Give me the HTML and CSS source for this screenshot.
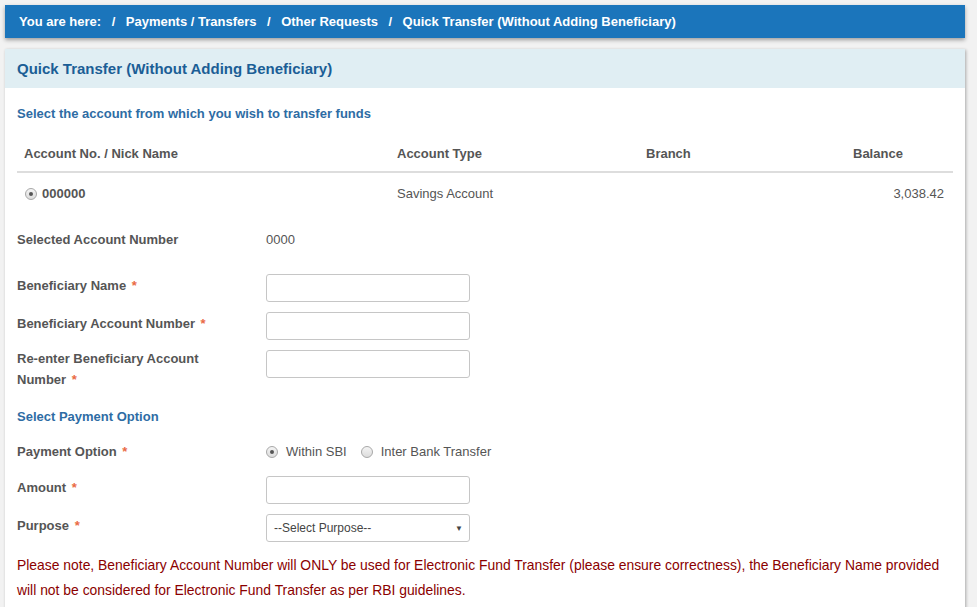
FILE: index.html
```html
<!DOCTYPE html>
<html>
<head>
<meta charset="utf-8">
<link rel="stylesheet" href="styles.css">
</head>
<body>
<div class="page">
  <nav class="crumbs">
    <span>You are here:</span><span class="sep">/</span>
    <span>Payments / Transfers</span><span class="sep">/</span>
    <span>Other Requests</span><span class="sep">/</span>
    <span>Quick Transfer (Without Adding Beneficiary)</span>
  </nav>
  <section class="panel">
    <header class="panel-head">Quick Transfer (Without Adding Beneficiary)</header>
    <div class="panel-body">
      <p class="subhead intro">Select the account from which you wish to transfer funds</p>
      <div class="acct-table">
        <div class="thead">
          <div>Account No. / Nick Name</div>
          <div>Account Type</div>
          <div>Branch</div>
          <div>Balance</div>
        </div>
        <div class="trow">
          <div class="acct-no"><span class="radio checked"></span>000000</div>
          <div>Savings Account</div>
          <div></div>
          <div class="num">3,038.42</div>
        </div>
      </div>

      <div class="frow selected">
        <label class="lbl">Selected Account Number</label>
        <span class="val">0000</span>
      </div>

      <div class="frow field first">
        <label class="lbl">Beneficiary Name <span class="req">*</span></label>
        <input class="inp" type="text">
      </div>
      <div class="frow field">
        <label class="lbl">Beneficiary Account Number <span class="req">*</span></label>
        <input class="inp" type="text">
      </div>
      <div class="frow field">
        <label class="lbl two"><span class="line">Re-enter Beneficiary Account</span><span class="line">Number <span class="req">*</span></span></label>
        <input class="inp" type="text">
      </div>

      <p class="subhead pay">Select Payment Option</p>

      <div class="frow opt">
        <label class="lbl">Payment Option <span class="req">*</span></label>
        <div class="radios">
          <span class="ropt"><span class="radio checked"></span>Within SBI</span>
          <span class="ropt"><span class="radio"></span>Inter Bank Transfer</span>
        </div>
      </div>
      <div class="frow field amt">
        <label class="lbl">Amount <span class="req">*</span></label>
        <input class="inp" type="text">
      </div>
      <div class="frow field">
        <label class="lbl">Purpose <span class="req">*</span></label>
        <div class="inp sel"><span>--Select Purpose--</span><span class="arrow">&#9660;</span></div>
      </div>

      <p class="note">Please note, Beneficiary Account Number will ONLY be used for Electronic Fund Transfer (please ensure correctness), the Beneficiary Name provided will not be considered for Electronic Fund Transfer as per RBI guidelines.</p>
    </div>
  </section>
</div>
</body>
</html>
```

FILE: styles.css
```css
* { box-sizing: border-box; }
html, body { margin: 0; padding: 0; }
body {
  background: #f2f2f2;
  font-family: "Liberation Sans", Arial, sans-serif;
  font-size: 13px;
  color: #555;
}
.page { padding: 5px 12px 0 5px; }
.crumbs {
  height: 33px;
  background: #1b75bb;
  color: #fff;
  font-weight: bold;
  display: flex;
  align-items: center;
  padding: 0 14px 1px;
  box-shadow: 0 2px 4px rgba(0,0,0,0.35);
}
.crumbs .sep { margin: 0 10.5px; }
.panel {
  margin-top: 11px;
  background: #fff;
  box-shadow: 1px 1px 3px rgba(0,0,0,0.3);
}
.panel-head {
  height: 39px;
  background: #e0eef3;
  color: #1b5e96;
  font-weight: bold;
  font-size: 15px;
  display: flex;
  align-items: center;
  padding: 0 12px 1px;
}
.panel-body { padding: 0 12px 10px; }
.subhead {
  margin: 0;
  color: #2e6ca4;
  font-weight: bold;
  line-height: 18px;
}
.intro { padding-top: 17px; }
.thead, .trow {
  display: grid;
  grid-template-columns: 373px 249px 207px 107px;
}
.thead {
  height: 50px;
  align-items: end;
  border-bottom: 2px solid #ddd;
  font-weight: bold;
  padding-bottom: 8px;
}
.thead > div, .trow > div { padding: 0 7px; line-height: 18px; }
.trow { height: 42px; align-items: center; }
.acct-no { font-weight: bold; display: flex; align-items: center; }
.acct-no .radio { margin-right: 5px; margin-left: 1px; }
.num { text-align: right; padding-right: 9px !important; }
.radio {
  display: inline-block;
  width: 12px;
  height: 12px;
  border-radius: 50%;
  border: 1px solid #a8a8a8;
  background: linear-gradient(#f4f4f4, #dcdcdc);
  position: relative;
  flex: none;
}
.radio.checked::after {
  content: "";
  position: absolute;
  left: 3px; top: 3px;
  width: 4px; height: 4px;
  border-radius: 50%;
  background: #555;
}
.frow { display: flex; align-items: flex-start; }
.lbl {
  width: 249px;
  flex: none;
  font-weight: bold;
  line-height: 21px;
  padding-top: 1px;
}
.lbl.two { padding-top: 0; margin-top: -2px; }
.lbl .line { display: block; }
.req { color: #ea6a45; margin-left: 2px; }
.selected { margin-top: 12px; }
.selected .lbl { line-height: 26px; padding-top: 0; }
.val { line-height: 26px; }
.field { margin-top: 10px; }
.field.first { margin-top: 21px; }
.inp {
  width: 204px;
  height: 28px;
  border: 1px solid #c6c6c6;
  border-radius: 3px;
  background: #fff;
  margin: 0;
  font: inherit;
}
.sel {
  display: flex;
  align-items: center;
  justify-content: space-between;
  padding: 0 6px 0 7px;
  font-size: 12px;
  color: #444;
}
.sel .arrow { font-size: 8px; color: #444; }
.pay { margin-top: 18px; }
.opt { margin-top: 15px; }
.opt .lbl { padding-top: 0; }
.radios { display: flex; align-items: center; height: 21px; }
.ropt { display: flex; align-items: center; margin-right: 14px; }
.ropt .radio { margin-right: 8px; }
.amt { margin-top: 14px; }
.note {
  margin: 11px 0 0;
  color: #8b0000;
  font-size: 13.9px;
  line-height: 25px;
}
```
